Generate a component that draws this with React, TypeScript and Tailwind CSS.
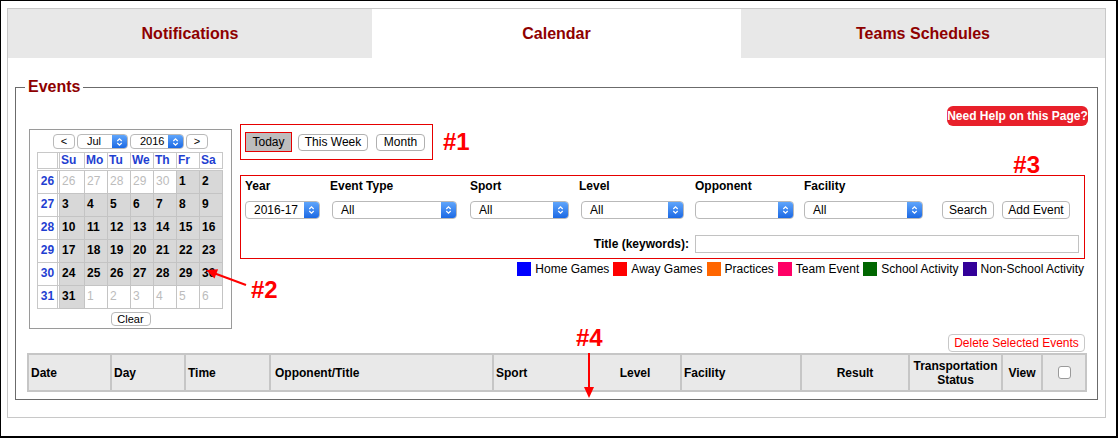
import clsx from "clsx";

const font = "font-['Liberation_Sans',Arial,sans-serif]";

const weeks = [
  { wk: 26, days: [26, 27, 28, 29, 30, 1, 2].map((d, i) => ({ d, cur: i >= 5 })) },
  { wk: 27, days: [3, 4, 5, 6, 7, 8, 9].map((d) => ({ d, cur: true })) },
  { wk: 28, days: [10, 11, 12, 13, 14, 15, 16].map((d) => ({ d, cur: true })) },
  { wk: 29, days: [17, 18, 19, 20, 21, 22, 23].map((d) => ({ d, cur: true })) },
  { wk: 30, days: [24, 25, 26, 27, 28, 29, 30].map((d) => ({ d, cur: true })) },
  { wk: 31, days: [31, 1, 2, 3, 4, 5, 6].map((d, i) => ({ d, cur: i === 0 })) },
];

const dayNames = ["Su", "Mo", "Tu", "We", "Th", "Fr", "Sa"];

const legend = [
  { label: "Home Games", color: "bg-[#0000ff]" },
  { label: "Away Games", color: "bg-[#ff0000]" },
  { label: "Practices", color: "bg-[#ff6600]" },
  { label: "Team Event", color: "bg-[#ff0066]" },
  { label: "School Activity", color: "bg-[#006600]" },
  { label: "Non-School Activity", color: "bg-[#330099]" },
];

function Select({ className, value, small }: { className: string; value: string; small?: boolean }) {
  return (
    <div
      className={clsx(
        "flex overflow-hidden rounded-[4px] border border-[#b9b9b9] bg-white",
        small ? "h-[15px]" : "h-[18px]",
        className
      )}
    >
      <span
        className={clsx(
          "flex-1 text-black",
          small ? "pl-[9px] text-[11px] leading-[13px]" : "pl-[8px] text-[12px] leading-[16px]"
        )}
      >
        {value}
      </span>
      <span className="flex w-[15px] items-center justify-center bg-linear-to-b from-[#5fa5fb] to-[#1b69e4]">
        <svg width="7" height="10" viewBox="0 0 7 10">
          <path d="M1.3 4 L3.5 1.8 L5.7 4 M1.3 6 L3.5 8.2 L5.7 6" fill="none" stroke="white" strokeWidth="1.2" />
        </svg>
      </span>
    </div>
  );
}

function MiniCalendar() {
  return (
    <div className="mt-[33px] ml-[4px] h-[200px] w-[203px] shrink-0 border border-[#9a9a9a] bg-white pt-[4px]">
      <div className="flex h-[15px] justify-center gap-[2px]">
        <button className="h-[15px] w-[22px] rounded-[4px] border border-[#b9b9b9] bg-white text-[11px] leading-[13px]">
          &lt;
        </button>
        <Select className="w-[51px]" small value="Jul" />
        <Select className="w-[54px]" small value="2016" />
        <button className="h-[15px] w-[22px] rounded-[4px] border border-[#b9b9b9] bg-white text-[11px] leading-[13px]">
          &gt;
        </button>
      </div>

      <div className="mt-[3px] ml-[7px] flex w-[186px] border-t border-l border-[#c8c8c8]">
        <div className="h-[16px] w-[22px] border-r-[3px] border-b border-double border-[#c8c8c8]" />
        {dayNames.map((n, i) => (
          <div
            key={n}
            className={clsx(
              "h-[16px] border-r border-b border-[#c8c8c8] pl-[1px] text-[12px] font-bold leading-[15px] text-[#1f3fd1]",
              i === 0 ? "w-[25px]" : "w-[23px]"
            )}
          >
            {n}
          </div>
        ))}
      </div>

      <div className="mt-[1px] ml-[7px] w-[186px] border-t border-l border-[#c8c8c8]">
        {weeks.map((w) => (
          <div key={w.wk} className="flex">
            <div className="h-[23px] w-[22px] border-r-[3px] border-b border-double border-[#c8c8c8] pt-[3px] text-center text-[12px] font-bold leading-[14px] text-[#1f3fd1]">
              {w.wk}
            </div>
            {w.days.map((day, i) => (
              <div
                key={i}
                className={clsx(
                  "h-[23px] border-r border-b border-[#c4c4c4] pt-[3px] pl-[2px] text-[12px] leading-[14px]",
                  i === 0 ? "w-[25px]" : "w-[23px]",
                  day.cur ? "bg-[#d8d8d8] font-bold text-black" : "bg-white text-[#bcbcbc]"
                )}
              >
                {day.d}
              </div>
            ))}
          </div>
        ))}
      </div>

      <div className="mt-[3px] flex justify-center">
        <button className="h-[14px] w-[40px] rounded-[4px] border border-[#b9b9b9] bg-white text-[11px] leading-[12px]">
          Clear
        </button>
      </div>
    </div>
  );
}

function Filters() {
  const cols = [
    { label: "Year", w: "w-[85px]", sel: "w-[75px]", value: "2016-17" },
    { label: "Event Type", w: "w-[140px]", sel: "ml-[2px] w-[125px]", value: "All" },
    { label: "Sport", w: "w-[109px]", sel: "w-[99px]", value: "All" },
    { label: "Level", w: "w-[116px]", sel: "ml-[2px] w-[103px]", value: "All" },
    { label: "Opponent", w: "w-[109px]", sel: "w-[99px]", value: "" },
    { label: "Facility", w: "w-[138px]", sel: "w-[119px]", value: "All" },
  ];

  return (
    <div className="mr-[3px] border border-[#e60000] pt-[3px] pb-[5px] pl-[4px]">
      <div className="flex items-end">
        {cols.map((c) => (
          <div key={c.label} className={clsx("flex flex-col", c.w)}>
            <span className="text-[12px] font-bold leading-[14px]">{c.label}</span>
            <Select className={clsx("mt-[8px]", c.sel)} value={c.value} />
          </div>
        ))}
        <button className="h-[18px] w-[52px] rounded-[4px] border border-[#b9b9b9] bg-white text-[12px] leading-[16px]">
          Search
        </button>
        <button className="ml-[8px] h-[18px] w-[68px] rounded-[4px] border border-[#b9b9b9] bg-white text-[12px] leading-[16px]">
          Add Event
        </button>
      </div>
      <div className="mt-[16px] flex items-center justify-end pr-[5px]">
        <span className="mr-[6px] text-[12px] font-bold leading-[14px]">Title (keywords):</span>
        <div className="h-[18px] w-[384px] border border-[#c2c2c2] bg-white" />
      </div>
    </div>
  );
}

function EventsTable() {
  const cell = "flex h-full items-center border-r-2 border-[#c6c6c6]";
  return (
    <div className="mt-[1px] flex h-[39px] w-[1060px] border-2 border-[#c6c6c6] bg-[#e9e9e9] text-[12px] font-bold text-black">
      <div className={clsx(cell, "w-[83px] pl-[2px]")}>Date</div>
      <div className={clsx(cell, "w-[74px] pl-[2px]")}>Day</div>
      <div className={clsx(cell, "w-[85px] pl-[2px]")}>Time</div>
      <div className={clsx(cell, "w-[223px] pl-[4px]")}>Opponent/Title</div>
      <div className={clsx(cell, "w-[96px] pl-[2px]")}>Sport</div>
      <div className={clsx(cell, "w-[92px] justify-center")}>Level</div>
      <div className={clsx(cell, "w-[120px] pl-[2px]")}>Facility</div>
      <div className={clsx(cell, "w-[108px] justify-center")}>Result</div>
      <div className={clsx(cell, "w-[93px] justify-center text-center leading-[14px]")}>
        Transportation
        <br />
        Status
      </div>
      <div className={clsx(cell, "w-[40px] justify-center")}>View</div>
      <div className="flex h-full flex-1 items-center justify-center">
        <span className="h-[13px] w-[13px] rounded-[3px] border border-[#9a9a9a] bg-white" />
      </div>
    </div>
  );
}

export default function App() {
  return (
    <div
      className={clsx(
        "relative h-[438px] w-[1118px] overflow-hidden border-t border-l border-r-2 border-b-2 border-black bg-white text-black",
        font
      )}
    >
      <div className="mt-[7px] ml-[6px] h-[410px] w-[1099px] border border-[#c8c8c8]">
        <div className="flex h-[49px] text-[16px] font-bold text-[#8e0000]">
          <div className="flex w-[364px] items-center justify-center bg-[#e8e8e8]">Notifications</div>
          <div className="flex w-[369px] items-center justify-center bg-white">Calendar</div>
          <div className="flex flex-1 items-center justify-center bg-[#e8e8e8]">Teams Schedules</div>
        </div>

        <fieldset className="mx-[7px] mt-[20px] border border-[#6b6b6b] pb-[7px] pl-[9px]">
          <legend className="px-[3px] text-[16px] font-bold leading-[18px] text-[#8e0000]">Events</legend>

          <div className="flex items-start">
            <MiniCalendar />

            <div className="ml-[8px] w-[848px]">
              <div className="mt-[10px] flex items-start justify-between">
                <div className="mt-[18px] flex items-center">
                  <div className="flex h-[36px] w-[193px] items-center border border-[#e60000] pl-[4px]">
                    <button className="h-[20px] w-[47px] border border-[#e60000] bg-[#bdbdbd] text-[12px] leading-[18px]">
                      Today
                    </button>
                    <button className="ml-[6px] h-[17px] w-[70px] rounded-[4px] border border-[#b0b0b0] bg-white text-[12px] leading-[15px]">
                      This Week
                    </button>
                    <button className="ml-[8px] h-[17px] w-[49px] rounded-[4px] border border-[#b0b0b0] bg-white text-[12px] leading-[15px]">
                      Month
                    </button>
                  </div>
                  <span className="ml-[10px] text-[24px] font-bold leading-[24px] text-[#f00]">#1</span>
                </div>
                <button className="h-[20px] w-[141px] rounded-[6px] bg-[#e8202a] text-[12px] font-bold leading-[20px] text-white">
                  Need Help on this Page?
                </button>
              </div>

              <div className="flex h-[15px] justify-end pr-[48px]">
                <span className="-mt-[3px] text-[24px] font-bold leading-[15px] text-[#f00]">#3</span>
              </div>

              <Filters />

              <div className="mt-[3px] mr-[4px] flex h-[14px] items-center justify-end text-[12px] leading-[14px]">
                {legend.map((l, i) => (
                  <div key={l.label} className={clsx("flex items-center gap-[4px]", i > 0 && "ml-[4px]")}>
                    <span className={clsx("h-[14px] w-[14px]", l.color)} />
                    <span>{l.label}</span>
                  </div>
                ))}
              </div>
            </div>
          </div>

          <div className="ml-[2px] w-[1060px]">
            <div className="mt-[5px] flex justify-end pr-[2px]">
              <button className="h-[18px] w-[137px] rounded-[4px] border border-[#c8c8c8] bg-white text-[12px] leading-[16px] text-[#f00]">
                Delete Selected Events
              </button>
            </div>
            <EventsTable />
          </div>
        </fieldset>
      </div>

      <svg className="pointer-events-none absolute top-0 left-0" width="1118" height="438">
        <line x1="245" y1="284" x2="214" y2="272.5" stroke="#f00" strokeWidth="2" />
        <polygon points="205,269 217.1,268.2 213.5,277.6" fill="#f00" />
        <line x1="588" y1="352" x2="588" y2="388" stroke="#f00" strokeWidth="2" />
        <polygon points="588,397 583,386 593,386" fill="#f00" />
      </svg>
      <span className="absolute top-[277px] left-[250px] text-[24px] font-bold leading-[24px] text-[#f00]">#2</span>
      <span className="absolute top-[325px] left-[575px] text-[24px] font-bold leading-[24px] text-[#f00]">#4</span>
    </div>
  );
}
